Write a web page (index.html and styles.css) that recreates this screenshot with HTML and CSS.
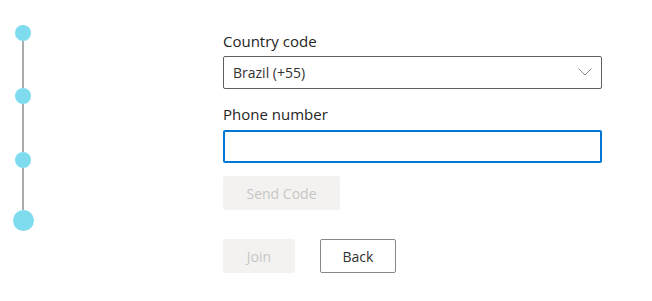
FILE: index.html
```html
<!DOCTYPE html>
<html>
<head>
<meta charset="utf-8">
<link rel="stylesheet" href="styles.css">
</head>
<body>
<div class="page">
  <div class="timeline">
    <div class="dot first"></div>
    <div class="seg s1"></div>
    <div class="dot"></div>
    <div class="seg s2"></div>
    <div class="dot"></div>
    <div class="seg s3"></div>
    <div class="dot big"></div>
  </div>
  <div class="form">
    <label class="label">Country code</label>
    <div class="select">
      <span>Brazil (+55)</span>
      <svg class="chev" width="14" height="8" viewBox="0 0 14 8"><path d="M0.5 0.5 L7 7 L13.5 0.5" fill="none" stroke="#8a8886" stroke-width="1"/></svg>
    </div>
    <label class="label second">Phone number</label>
    <div class="input"></div>
    <div class="btn disabled send">Send Code</div>
    <div class="actions">
      <div class="btn disabled join">Join</div>
      <div class="btn back">Back</div>
    </div>
  </div>
</div>
</body>
</html>
```
FILE: styles.css
```css
html, body {
  margin: 0;
  padding: 0;
  background: #ffffff;
}
body {
  font-family: "Open Sans", "Noto Sans", sans-serif;
  color: #323130;
}
.page {
  display: flex;
  width: 652px;
  height: 301px;
}
.timeline {
  width: 46px;
  display: flex;
  flex-direction: column;
  align-items: center;
  padding-top: 25px;
}
.dot {
  width: 16px;
  height: 16px;
  border-radius: 50%;
  background: #7fdcef;
  flex: none;
}
.dot.big {
  width: 21px;
  height: 21px;
}
.seg {
  width: 2px;
  background: #ababab;
  flex: none;
}
.s1 { height: 47px; }
.s2 { height: 48px; }
.s3 { height: 42px; }
.form {
  margin-left: 177px;
  width: 379px;
  display: flex;
  flex-direction: column;
  padding-top: 31px;
}
.label {
  font-size: 15px;
  font-weight: 500;
  line-height: 20px;
  height: 25px;
  display: block;
  color: #252423;
}
.label.second {
  margin-top: 15px;
  height: 26px;
}
.select {
  box-sizing: border-box;
  height: 33px;
  border: 1px solid #605e5c;
  border-radius: 2px;
  display: flex;
  align-items: center;
  justify-content: space-between;
  padding: 0 9px 0 9px;
  font-size: 14px;
}
.chev {
  margin-top: -1px;
}
.input {
  box-sizing: border-box;
  height: 33px;
  border: 2px solid #0078d4;
  border-radius: 2px;
}
.btn {
  box-sizing: border-box;
  height: 34px;
  border-radius: 2px;
  font-size: 14px;
  font-weight: 400;
  display: flex;
  align-items: center;
  justify-content: center;
}
.disabled {
  background: #f3f2f1;
  color: #c8c6c4;
}
.send {
  margin-top: 13px;
  width: 117px;
}
.actions {
  display: flex;
  gap: 25px;
  margin-top: 29px;
}
.join {
  width: 72px;
}
.back {
  width: 76px;
  border: 1px solid #8a8886;
  color: #323130;
  background: #ffffff;
}
```
